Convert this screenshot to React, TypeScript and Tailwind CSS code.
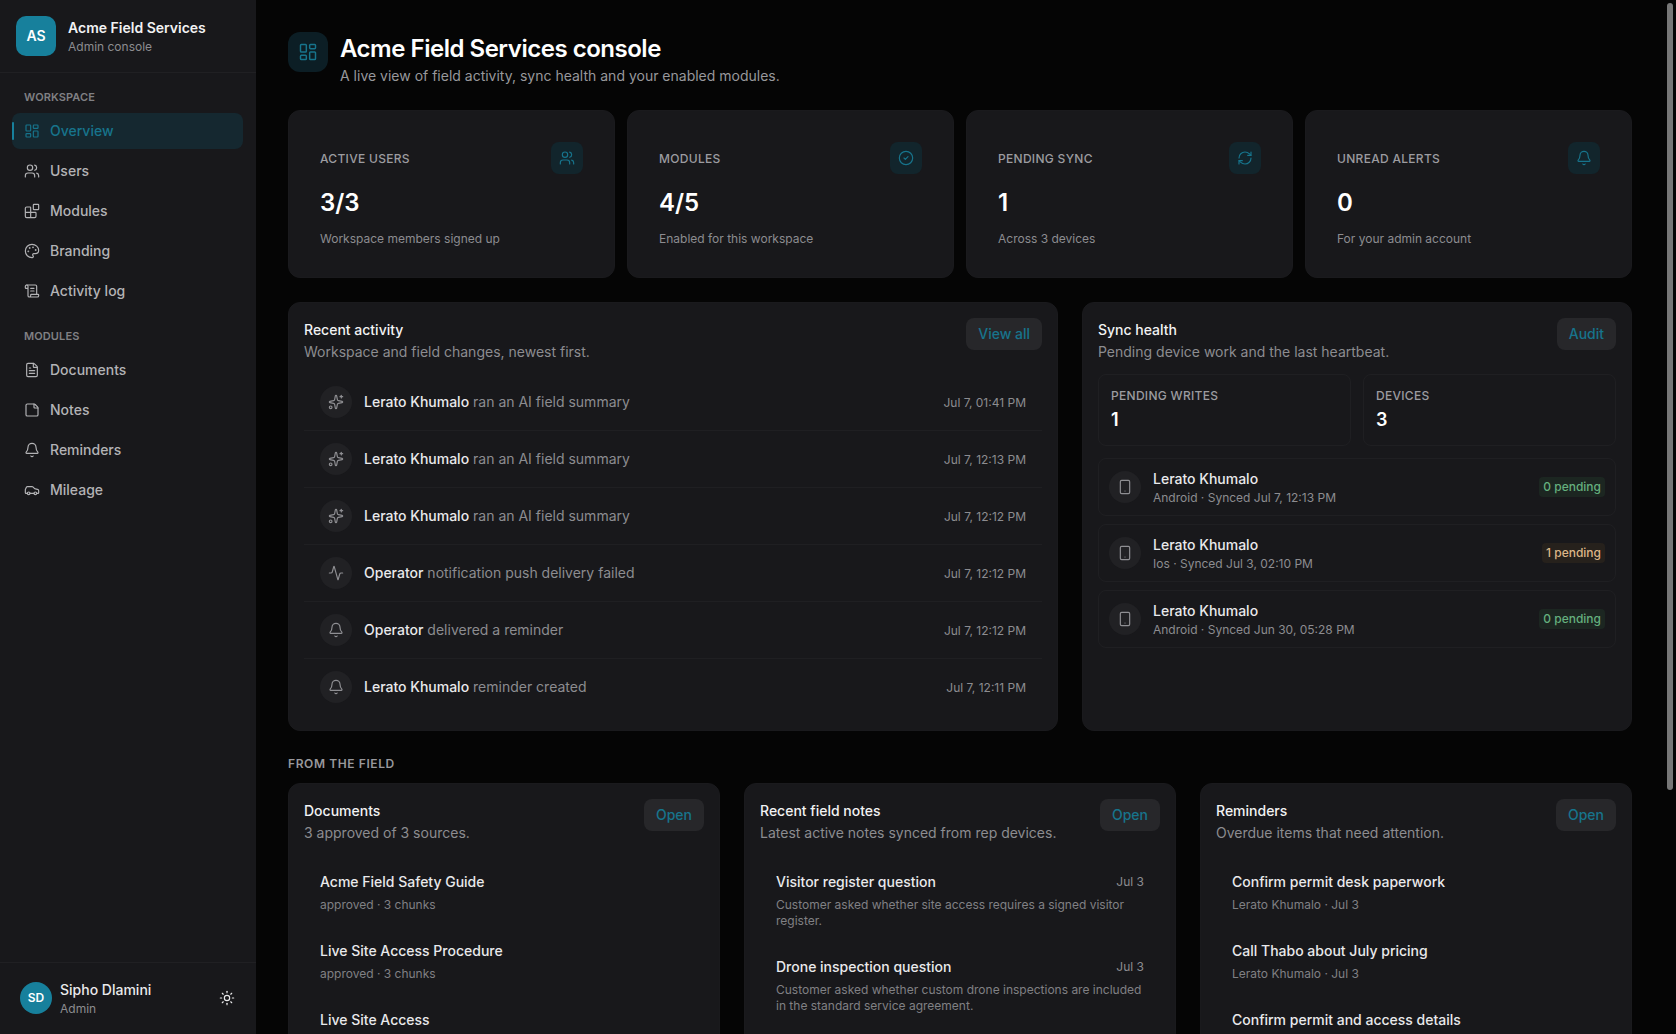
import {
  Activity,
  Bell,
  Blocks,
  Car,
  CircleCheck,
  FileText,
  LayoutDashboard,
  Palette,
  RefreshCw,
  ScrollText,
  Smartphone,
  Sparkles,
  StickyNote,
  Sun,
  Users,
} from 'lucide-react';

const WORKSPACE_NAV = [
  { label: 'Overview', icon: LayoutDashboard, active: true },
  { label: 'Users', icon: Users },
  { label: 'Modules', icon: Blocks },
  { label: 'Branding', icon: Palette },
  { label: 'Activity log', icon: ScrollText },
];

const MODULE_NAV = [
  { label: 'Documents', icon: FileText },
  { label: 'Notes', icon: StickyNote },
  { label: 'Reminders', icon: Bell },
  { label: 'Mileage', icon: Car },
];

const STATS = [
  { label: 'Active users', value: '3/3', note: 'Workspace members signed up', icon: Users },
  { label: 'Modules', value: '4/5', note: 'Enabled for this workspace', icon: CircleCheck },
  { label: 'Pending sync', value: '1', note: 'Across 3 devices', icon: RefreshCw },
  { label: 'Unread alerts', value: '0', note: 'For your admin account', icon: Bell },
];

const ACTIVITY = [
  { who: 'Lerato Khumalo', what: 'ran an AI field summary', when: 'Jul 7, 01:41 PM', icon: Sparkles },
  { who: 'Lerato Khumalo', what: 'ran an AI field summary', when: 'Jul 7, 12:13 PM', icon: Sparkles },
  { who: 'Lerato Khumalo', what: 'ran an AI field summary', when: 'Jul 7, 12:12 PM', icon: Sparkles },
  { who: 'Operator', what: 'notification push delivery failed', when: 'Jul 7, 12:12 PM', icon: Activity },
  { who: 'Operator', what: 'delivered a reminder', when: 'Jul 7, 12:12 PM', icon: Bell },
  { who: 'Lerato Khumalo', what: 'reminder created', when: 'Jul 7, 12:11 PM', icon: Bell },
];

const DEVICES = [
  { sub: 'Android · Synced Jul 7, 12:13 PM', pending: 0 },
  { sub: 'Ios · Synced Jul 3, 02:10 PM', pending: 1 },
  { sub: 'Android · Synced Jun 30, 05:28 PM', pending: 0 },
];

const DOCUMENTS = [
  { title: 'Acme Field Safety Guide', sub: 'approved · 3 chunks' },
  { title: 'Live Site Access Procedure', sub: 'approved · 3 chunks' },
  { title: 'Live Site Access', sub: 'approved · 3 chunks' },
];

const NOTES = [
  {
    title: 'Visitor register question',
    sub: 'Customer asked whether site access requires a signed visitor register.',
  },
  {
    title: 'Drone inspection question',
    sub: 'Customer asked whether custom drone inspections are included in the standard service agreement.',
  },
];

const REMINDERS = [
  { title: 'Confirm permit desk paperwork', sub: 'Lerato Khumalo · Jul 3' },
  { title: 'Call Thabo about July pricing', sub: 'Lerato Khumalo · Jul 3' },
  { title: 'Confirm permit and access details', sub: 'Lerato Khumalo · Jul 3' },
];

function NavItem({ item }: { item: { label: string; icon: typeof Users; active?: boolean } }) {
  const Icon = item.icon;
  return (
    <div
      className={`relative h-9 flex items-center gap-2.5 px-3 rounded-lg text-sm font-medium ${
        item.active ? 'bg-[#152830] text-[#17748c]' : 'text-[#b3b3b6]'
      }`}
    >
      {item.active && <span className="absolute left-0 top-[9px] w-0.5 h-[18px] rounded-full bg-[#17809c]" />}
      <Icon className="w-4 h-4 shrink-0" strokeWidth={1.75} />
      {item.label}
    </div>
  );
}

function PanelHeader({ title, sub, action }: { title: string; sub: string; action: string }) {
  return (
    <div className="flex items-start justify-between gap-3 mb-3">
      <div>
        <h2 className="text-sm leading-6 font-medium text-[#f2f2f3]">{title}</h2>
        <p className="text-sm leading-5 text-[#8c8c90]">{sub}</p>
      </div>
      <button className="h-8 px-3 rounded-lg bg-[#27272a] text-sm font-medium text-[#17748c]">{action}</button>
    </div>
  );
}

function SimpleList({ items }: { items: { title: string; sub: string }[] }) {
  return (
    <div>
      {items.map(item => (
        <div key={item.title} className="px-4 pt-[17px] pb-[11px]">
          <p className="text-sm leading-5 font-medium text-[#e9e9eb]">{item.title}</p>
          <p className="mt-[5px] text-xs leading-4 text-[#808084]">{item.sub}</p>
        </div>
      ))}
    </div>
  );
}

export default function App() {
  return (
    <div className="flex h-screen overflow-hidden bg-[#050505] font-['Inter',sans-serif]">
      {/* Sidebar */}
      <aside className="w-64 shrink-0 flex flex-col bg-[#18181b]">
        <div className="h-[73px] shrink-0 flex items-center gap-3 px-4 border-b border-[#202023]">
          <div className="w-10 h-10 rounded-[10px] bg-[#17809c] flex items-center justify-center text-sm font-semibold text-white">
            AS
          </div>
          <div className="pt-px">
            <p className="text-sm leading-5 font-semibold text-[#f2f2f3]">Acme Field Services</p>
            <p className="pt-px text-xs leading-4 text-[#8c8c90]">Admin console</p>
          </div>
        </div>

        <nav className="flex-1 pl-3 pr-[13px] pt-4">
          <p className="px-3 mb-2 text-[11px] leading-4 font-semibold tracking-[0.01em] uppercase text-[#808084]">Workspace</p>
          <div className="flex flex-col gap-1">
            {WORKSPACE_NAV.map(item => (
              <NavItem key={item.label} item={item} />
            ))}
          </div>
          <p className="px-3 mt-[19px] mb-2 text-[11px] leading-4 font-semibold tracking-[0.01em] uppercase text-[#808084]">Modules</p>
          <div className="flex flex-col gap-1">
            {MODULE_NAV.map(item => (
              <NavItem key={item.label} item={item} />
            ))}
          </div>
        </nav>

        <div className="h-[72px] shrink-0 flex items-center gap-2 pl-5 pr-[21px] pb-px border-t border-[#202023]">
          <div className="w-8 h-8 rounded-full bg-[#17809c] flex items-center justify-center text-xs font-semibold text-white">
            SD
          </div>
          <div className="flex-1">
            <p className="text-sm leading-5 font-medium text-[#e9e9eb]">Sipho Dlamini</p>
            <p className="pt-px -mb-px text-xs leading-4 text-[#8c8c90]">Admin</p>
          </div>
          <Sun className="w-4 h-4 text-[#e9e9eb]" strokeWidth={1.75} />
        </div>
      </aside>

      {/* Main */}
      <div className="relative flex-1 min-w-0">
        <main className="h-full overflow-y-auto pl-8 pr-11 pt-8 pb-8">
          {/* Page header */}
          <div className="flex items-start gap-3 mb-6">
            <div className="w-10 h-10 rounded-xl bg-[#0c1e25] flex items-center justify-center text-[#17748c]">
              <LayoutDashboard className="w-5 h-5" strokeWidth={1.75} />
            </div>
            <div>
              <h1 className="pt-px text-2xl font-semibold tracking-[-0.02em] text-white">Acme Field Services console</h1>
              <p className="mt-px text-sm leading-5 text-[#98989c]">
                A live view of field activity, sync health and your enabled modules.
              </p>
            </div>
          </div>

          {/* Stat cards */}
          <div className="grid grid-cols-4 gap-3 mb-6">
            {STATS.map(stat => {
              const Icon = stat.icon;
              return (
                <div key={stat.label} className="rounded-xl bg-[#18181b] border border-[#1a1a1d] px-[31px] pt-[31px] pb-[30px]">
                  <div className="flex items-center justify-between">
                    <span className="pt-0.5 text-xs font-medium tracking-wide uppercase text-[#9c9ca0]">{stat.label}</span>
                    <span className="w-8 h-8 rounded-lg bg-[#12252c] flex items-center justify-center text-[#17748c]">
                      <Icon className="w-4 h-4" strokeWidth={1.75} />
                    </span>
                  </div>
                  <p className="mt-[13px] text-2xl font-semibold text-white">{stat.value}</p>
                  <p className="mt-3 text-xs leading-4 text-[#8c8c90]">{stat.note}</p>
                </div>
              );
            })}
          </div>

          {/* Activity and sync */}
          <div className="grid grid-cols-[7fr_5fr] gap-6 mb-6">
            <section className="rounded-xl bg-[#18181b] border border-[#1a1a1d] p-[15px]">
              <PanelHeader title="Recent activity" sub="Workspace and field changes, newest first." action="View all" />
              <div>
                {ACTIVITY.map((row, i) => {
                  const Icon = row.icon;
                  return (
                    <div
                      key={i}
                      className={`flex items-center gap-3 px-4 py-3 ${i < ACTIVITY.length - 1 ? 'border-b border-[#1f1f22]' : ''}`}
                    >
                      <span className="w-8 h-8 shrink-0 rounded-full bg-[#212124] flex items-center justify-center text-[#8f8f93]">
                        <Icon className="w-4 h-4" strokeWidth={1.75} />
                      </span>
                      <p className="flex-1 text-sm text-[#8c8c90]">
                        <span className="font-medium text-[#e9e9eb]">{row.who}</span> {row.what}
                      </p>
                      <span className="pt-px text-xs text-[#8c8c90]">{row.when}</span>
                    </div>
                  );
                })}
              </div>
            </section>

            <section className="rounded-xl bg-[#18181b] border border-[#1a1a1d] p-[15px]">
              <PanelHeader title="Sync health" sub="Pending device work and the last heartbeat." action="Audit" />
              <div className="grid grid-cols-2 gap-3 mb-3">
                {[
                  { label: 'Pending writes', value: '1' },
                  { label: 'Devices', value: '3' },
                ].map(box => (
                  <div key={box.label} className="h-[72px] rounded-lg border border-[#1f1f22] px-3 pt-[13px]">
                    <p className="text-xs leading-4 font-medium tracking-wide uppercase text-[#9c9ca0]">{box.label}</p>
                    <p className="mt-0.5 text-lg font-semibold text-white">{box.value}</p>
                  </div>
                ))}
              </div>
              <div className="flex flex-col gap-2">
                {DEVICES.map(device => (
                  <div key={device.sub} className="flex items-center gap-3 px-2.5 py-2.5 rounded-lg border border-[#1f1f22]">
                    <span className="w-8 h-8 shrink-0 rounded-full bg-[#212124] flex items-center justify-center text-[#8f8f93]">
                      <Smartphone className="w-4 h-4" strokeWidth={1.75} />
                    </span>
                    <div className="flex-1">
                      <p className="text-sm leading-5 font-medium text-[#e9e9eb]">Lerato Khumalo</p>
                      <p className="pt-px -mb-px text-xs leading-4 text-[#8c8c90]">{device.sub}</p>
                    </div>
                    <span
                      className={`h-5 px-1 rounded flex items-center text-xs font-medium ${
                        device.pending ? 'bg-[#26211c] text-[#dcb688]' : 'bg-[#1c2621] text-[#65b07e]'
                      }`}
                    >
                      {device.pending} pending
                    </span>
                  </div>
                ))}
              </div>
            </section>
          </div>

          {/* From the field */}
          <p className="mb-[11px] pt-px text-xs leading-4 font-semibold tracking-wider uppercase text-[#98989c]">From the field</p>
          <div className="grid grid-cols-3 gap-6 min-h-[543px]">
            <section className="rounded-xl bg-[#18181b] border border-[#1a1a1d] p-[15px]">
              <PanelHeader title="Documents" sub="3 approved of 3 sources." action="Open" />
              <SimpleList items={DOCUMENTS} />
            </section>

            <section className="rounded-xl bg-[#18181b] border border-[#1a1a1d] p-[15px]">
              <PanelHeader title="Recent field notes" sub="Latest active notes synced from rep devices." action="Open" />
              <div>
                {NOTES.map(note => (
                  <div key={note.title} className="px-4 pt-[17px] pb-[11px]">
                    <div className="flex items-center justify-between">
                      <p className="text-sm leading-5 font-medium text-[#e9e9eb]">{note.title}</p>
                      <span className="text-xs text-[#8c8c90]">Jul 3</span>
                    </div>
                    <p className="mt-[5px] text-xs leading-4 text-[#808084]">{note.sub}</p>
                  </div>
                ))}
              </div>
            </section>

            <section className="rounded-xl bg-[#18181b] border border-[#1a1a1d] p-[15px]">
              <PanelHeader title="Reminders" sub="Overdue items that need attention." action="Open" />
              <SimpleList items={REMINDERS} />
            </section>
          </div>
        </main>

        {/* Scrollbar thumb */}
        <div className="absolute right-[3px] top-[3px] w-1.5 h-[787px] rounded-full bg-[#777777]" />
      </div>
    </div>
  );
}
